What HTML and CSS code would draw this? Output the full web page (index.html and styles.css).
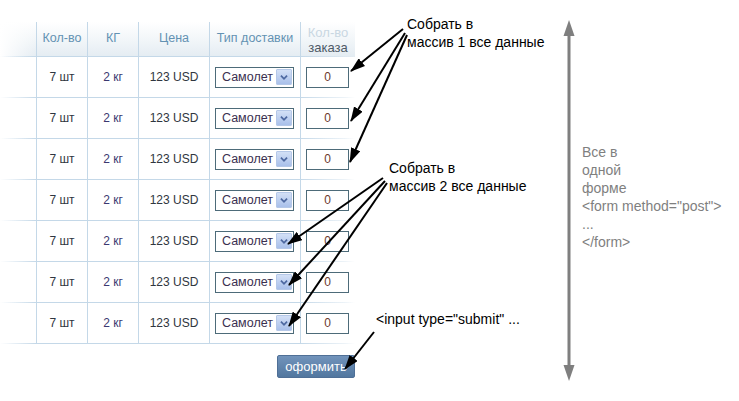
FILE: index.html
```html
<!DOCTYPE html>
<html lang="ru">
<head>
<meta charset="utf-8">
<title>Форма заказа</title>
<link rel="stylesheet" href="styles.css">
</head>
<body>
<div class="page">
  <form class="order" method="post">
    <div class="grid">
      <div class="row head">
        <div class="pad"></div>
        <div class="c">Кол-во</div>
        <div class="c">КГ</div>
        <div class="c">Цена</div>
        <div class="c">Тип доставки</div>
        <div class="c last"><span class="faded">Кол-во</span><span class="dark">заказа</span></div>
      </div>
      <div class="row"><div class="pad"></div><div class="c">7 шт</div><div class="c kg">2 кг</div><div class="c">123 USD</div><div class="c sel"><div class="select"><span>Самолет</span><i class="dd"><svg viewBox="0 0 16 16"><path d="M4.5 6.5 L8 10 L11.5 6.5" /></svg></i></div></div><div class="c inp"><div class="qty">0</div></div></div>
      <div class="row"><div class="pad"></div><div class="c">7 шт</div><div class="c kg">2 кг</div><div class="c">123 USD</div><div class="c sel"><div class="select"><span>Самолет</span><i class="dd"><svg viewBox="0 0 16 16"><path d="M4.5 6.5 L8 10 L11.5 6.5" /></svg></i></div></div><div class="c inp"><div class="qty">0</div></div></div>
      <div class="row"><div class="pad"></div><div class="c">7 шт</div><div class="c kg">2 кг</div><div class="c">123 USD</div><div class="c sel"><div class="select"><span>Самолет</span><i class="dd"><svg viewBox="0 0 16 16"><path d="M4.5 6.5 L8 10 L11.5 6.5" /></svg></i></div></div><div class="c inp"><div class="qty">0</div></div></div>
      <div class="row"><div class="pad"></div><div class="c">7 шт</div><div class="c kg">2 кг</div><div class="c">123 USD</div><div class="c sel"><div class="select"><span>Самолет</span><i class="dd"><svg viewBox="0 0 16 16"><path d="M4.5 6.5 L8 10 L11.5 6.5" /></svg></i></div></div><div class="c inp"><div class="qty">0</div></div></div>
      <div class="row"><div class="pad"></div><div class="c">7 шт</div><div class="c kg">2 кг</div><div class="c">123 USD</div><div class="c sel"><div class="select"><span>Самолет</span><i class="dd"><svg viewBox="0 0 16 16"><path d="M4.5 6.5 L8 10 L11.5 6.5" /></svg></i></div></div><div class="c inp"><div class="qty">0</div></div></div>
      <div class="row"><div class="pad"></div><div class="c">7 шт</div><div class="c kg">2 кг</div><div class="c">123 USD</div><div class="c sel"><div class="select"><span>Самолет</span><i class="dd"><svg viewBox="0 0 16 16"><path d="M4.5 6.5 L8 10 L11.5 6.5" /></svg></i></div></div><div class="c inp"><div class="qty">0</div></div></div>
      <div class="row"><div class="pad"></div><div class="c">7 шт</div><div class="c kg">2 кг</div><div class="c">123 USD</div><div class="c sel"><div class="select"><span>Самолет</span><i class="dd"><svg viewBox="0 0 16 16"><path d="M4.5 6.5 L8 10 L11.5 6.5" /></svg></i></div></div><div class="c inp"><div class="qty">0</div></div></div>
    </div>
    <div class="actions"><button type="button" class="submit">оформить</button></div>
  </form>

  <aside class="scope">
    <svg class="vline" width="12" height="361" viewBox="0 0 12 361">
      <path d="M6 0 L11.5 16 L0.5 16 Z" fill="#7f7f7f"/>
      <path d="M6 361 L11.5 345 L0.5 345 Z" fill="#7f7f7f"/>
      <rect x="4.5" y="12" width="3" height="337" fill="#7f7f7f"/>
    </svg>
    <p class="scope-text">Все в<br>одной<br>форме<br>&lt;form method="post"&gt;<br>...<br>&lt;/form&gt;</p>
  </aside>

  <p class="note note1">Собрать в<br>массив 1 все данные</p>
  <p class="note note2">Собрать в<br>массив 2 все данные</p>
  <p class="note note3">&lt;input type="submit" ...</p>

  <svg class="arrows" width="739" height="401" viewBox="0 0 739 401">
    <defs>
      <marker id="ah" markerUnits="userSpaceOnUse" markerWidth="15" markerHeight="10" refX="14" refY="5" orient="auto">
        <path d="M0 0 L15 5 L0 10 Z" fill="#000"/>
      </marker>
    </defs>
    <g stroke="#000" stroke-width="2" fill="none" marker-end="url(#ah)">
      <line x1="403" y1="29" x2="351" y2="71"/>
      <line x1="405" y1="33" x2="351" y2="121"/>
      <line x1="407" y1="35" x2="350" y2="162"/>
      <line x1="383" y1="178" x2="288" y2="244"/>
      <line x1="385" y1="181" x2="289" y2="285"/>
      <line x1="387" y1="183" x2="289" y2="326"/>
      <line x1="374" y1="332" x2="345" y2="369"/>
    </g>
  </svg>
</div>
</body>
</html>
```

FILE: styles.css
```css
* { box-sizing: border-box; }
html, body { margin: 0; padding: 0; background: #fff; }
body { font-family: "Liberation Sans", Arial, sans-serif; color: #333; }

.page {
  position: relative;
  width: 739px;
  height: 401px;
  display: flex;
  overflow: hidden;
}

.order {
  width: 355px;
  padding-top: 22px;
  display: flex;
  flex-direction: column;
}

.grid { display: flex; flex-direction: column; }

.row {
  display: grid;
  grid-template-columns: 36px 51px 51px 71px 91px 55px;
  height: 41px;
  font-size: 12px;
  color: #2f3640;
  background: linear-gradient(to right, rgba(196,216,232,0) 0, rgba(196,216,232,0.5) 18px, #c4d8e8 36px, #c4d8e8 300px, rgba(196,216,232,0.3) 345px, rgba(196,216,232,0) 355px) left bottom / 100% 1px no-repeat;
}

.row .c {
  border-left: 1px solid #c4d8e8;
  display: flex;
  align-items: center;
  justify-content: center;
  padding-bottom: 1px;
}

.row .kg { color: #3b3870; }

.head {
  height: 35px;
  font-size: 12.5px;
  color: #6392b3;
  background:
    linear-gradient(to right, rgba(196,216,232,0) 0, #c4d8e8 36px, #c4d8e8 300px, rgba(196,216,232,0) 355px) left bottom / 100% 1px no-repeat,
    linear-gradient(to right, rgba(255,255,255,1) 0, rgba(255,255,255,0) 36px) left top / 100% 100% no-repeat,
    linear-gradient(to bottom, #ffffff 0, #f2f6f9 50%, #e4ecf2 100%);
}

.head .c { padding-bottom: 3px; }

.head .last {
  flex-direction: column;
  justify-content: flex-start;
  line-height: 15px;
  padding: 3px 0 0;
  font-size: 13px;
}
.head .faded { color: #c9d7e2; }
.head .dark { color: #4e5a66; }

.row .sel { justify-content: flex-start; padding-left: 5px; }
.row .inp { justify-content: flex-start; padding-left: 5px; }

.select {
  width: 79px;
  height: 21px;
  border: 1px solid #4d6b79;
  background: #fff;
  display: flex;
  align-items: center;
  justify-content: space-between;
  padding: 0 1px 0 6px;
  font-size: 12.5px;
  color: #3a3050;
  white-space: nowrap;
}

.dd {
  flex: none;
  width: 16px;
  height: 16px;
  background: linear-gradient(to bottom, #d3e0f6, #a9c0ea);
  border: 1px solid #b5c8e8;
  border-radius: 1px;
  display: flex;
}
.dd svg { width: 100%; height: 100%; }
.dd path { fill: none; stroke: #4d68a0; stroke-width: 2; }

.qty {
  width: 43px;
  height: 21px;
  border: 1px solid #4d6b79;
  display: flex;
  align-items: center;
  justify-content: center;
  font-size: 12px;
  color: #6b3a2e;
}

.actions {
  display: flex;
  justify-content: flex-end;
  padding-top: 11px;
}

.submit {
  width: 78px;
  height: 23px;
  border: 1px solid #4f6f96;
  border-radius: 2px;
  background: linear-gradient(to bottom, #7193bb, #52779f);
  color: #fff;
  font-family: "Liberation Sans", Arial, sans-serif;
  font-size: 13px;
  padding: 0 0 1px;
}

.scope {
  margin-left: 208px;
  padding-top: 20px;
  height: 381px;
  display: flex;
  align-items: center;
  gap: 7px;
}

.vline { flex: none; }

.scope-text {
  margin: 0;
  font-size: 14px;
  line-height: 18px;
  color: #7f7f7f;
  position: relative;
  top: -4px;
}

.note {
  position: absolute;
  margin: 0;
  font-size: 14px;
  line-height: 18px;
  color: #000;
}
.note1 { left: 407px; top: 15px; }
.note2 { left: 389px; top: 159px; }
.note3 { left: 376px; top: 310px; }

.arrows {
  position: absolute;
  left: 0;
  top: 0;
  pointer-events: none;
}
```
